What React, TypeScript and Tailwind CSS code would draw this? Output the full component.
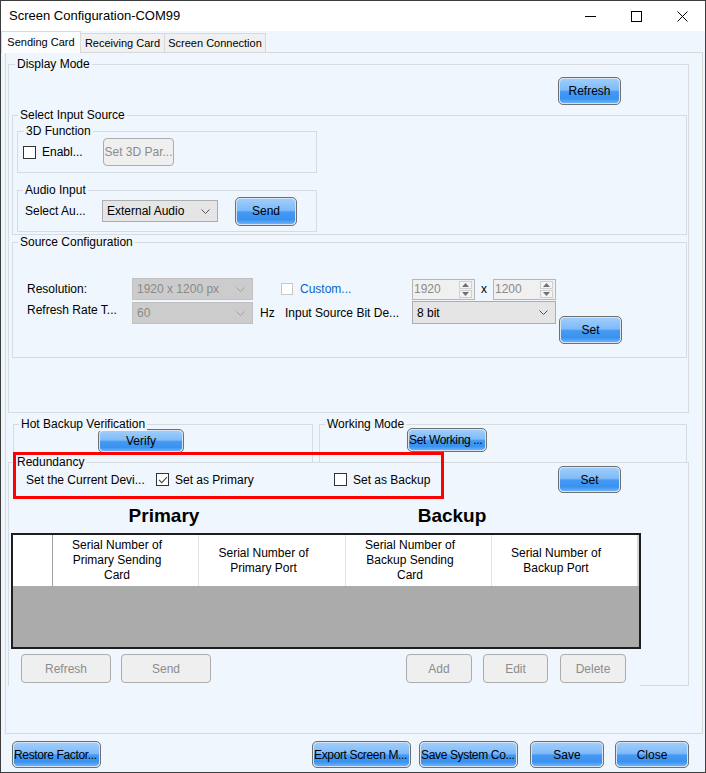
import React from 'react';

const PANEL_BG = 'bg-[#eff6fd]';

const blueFill =
  'bg-[linear-gradient(180deg,#9dcdfd_0%,#80bbf8_45%,#4499f3_53%,#3a92f0_82%,#68b2fb_100%)]';

function BlueButton({
  children,
  className = '',
  left = false,
}: {
  children: React.ReactNode;
  className?: string;
  left?: boolean;
}) {
  return (
    <div className={`shrink-0 rounded-[5px] border border-[#6f6f6f] bg-[#d7e3f3] p-px ${className}`}>
      <div
        className={`flex h-full w-full items-center overflow-hidden whitespace-nowrap rounded-[4px] text-[12px] text-black ${blueFill} ${
          left ? 'justify-start tracking-[-0.35px]' : 'justify-center'
        }`}
      >
        {children}
      </div>
    </div>
  );
}

function GrayButton({ children, className = '' }: { children: React.ReactNode; className?: string }) {
  return (
    <div
      className={`flex shrink-0 items-center justify-center rounded-[4px] border border-[#acacac] bg-[#efefef] text-[12px] text-[#8c8c8c] ${className}`}
    >
      {children}
    </div>
  );
}

function GroupBox({
  label,
  className = '',
  labelClass = 'left-[5px]',
  children,
}: {
  label: string;
  className?: string;
  labelClass?: string;
  children?: React.ReactNode;
}) {
  return (
    <div className={`relative shrink-0 border border-[#d6dce2] ${className}`}>
      <span className={`absolute top-[-8px] ${labelClass} ${PANEL_BG} whitespace-nowrap px-[2px] text-[12px] leading-[14px]`}>
        {label}
      </span>
      {children}
    </div>
  );
}

function CheckBox({ checked = false, disabled = false }: { checked?: boolean; disabled?: boolean }) {
  return (
    <span
      className={`flex shrink-0 items-center justify-center bg-white ${
        disabled ? 'h-[12px] w-[12px] border border-[#c8c8c8]' : 'h-[13px] w-[13px] border border-[#333333]'
      }`}
    >
      {checked && (
        <svg width="10" height="8" viewBox="0 0 10 8">
          <path d="M1 3.8 L3.8 6.6 L9 1.2" fill="none" stroke="#444" strokeWidth="1.1" />
        </svg>
      )}
    </span>
  );
}

function Chevron({ color }: { color: string }) {
  return (
    <svg width="9" height="5" viewBox="0 0 9 5" className="shrink-0">
      <path d="M0.5 0.5 L4.5 4.5 L8.5 0.5" fill="none" stroke={color} strokeWidth="1" />
    </svg>
  );
}

function Combo({
  value,
  disabled = false,
  className = '',
}: {
  value: string;
  disabled?: boolean;
  className?: string;
}) {
  return (
    <div
      className={`flex shrink-0 items-center justify-between border pl-[4px] pr-[7px] text-[12px] ${
        disabled ? 'border-[#c2c2c2] bg-[#cccccc] text-[#8a8a8a]' : 'border-[#adadad] bg-[#e5e5e5] text-black'
      } ${className}`}
    >
      <span className="whitespace-nowrap">{value}</span>
      <Chevron color={disabled ? '#a3a3a3' : '#555555'} />
    </div>
  );
}

function SpinBox({ value }: { value: string }) {
  return (
    <div className="flex h-[21px] w-[63px] shrink-0 border border-[#b5b5b5] bg-[#f0f0f0]">
      <span className="flex-1 pl-[1px] text-[12px] leading-[19px] text-[#8a8a8a]">{value}</span>
      <div className="mr-[2px] flex w-[13px] flex-col justify-center gap-px">
        <div className="flex h-[8px] items-center justify-center border border-[#cfcfcf] bg-[#f4f4f4]">
          <svg width="7" height="4" viewBox="0 0 7 4">
            <path d="M0 4 L3.5 0 L7 4 Z" fill="#707070" />
          </svg>
        </div>
        <div className="flex h-[8px] items-center justify-center border border-[#cfcfcf] bg-[#f4f4f4]">
          <svg width="7" height="4" viewBox="0 0 7 4">
            <path d="M0 0 L3.5 4 L7 0 Z" fill="#707070" />
          </svg>
        </div>
      </div>
    </div>
  );
}

function HeaderCell({ lines, className }: { lines: string[]; className: string }) {
  return (
    <div
      className={`flex shrink-0 flex-col items-center justify-center pr-[17px] text-center text-[12px] leading-[15px] ${className}`}
    >
      {lines.map((l) => (
        <span key={l} className="whitespace-nowrap">
          {l}
        </span>
      ))}
    </div>
  );
}

export default function App() {
  return (
    <div
      className={`flex h-[773px] w-[706px] flex-col border border-[#3d3d3d] ${PANEL_BG} font-['Liberation_Sans',Arial,sans-serif] text-[12px] text-black`}
    >
      {/* Title bar */}
      <div className="flex h-[30px] shrink-0 items-center bg-white">
        <span className="pl-[8px] text-[13px]">Screen Configuration-COM99</span>
        <div className="ml-auto flex h-full">
          <div className="flex w-[46px] items-center justify-center">
            <svg width="11" height="1" viewBox="0 0 11 1">
              <rect width="11" height="1" fill="#000" />
            </svg>
          </div>
          <div className="flex w-[46px] items-center justify-center">
            <svg width="11" height="11" viewBox="0 0 11 11">
              <rect x="0.5" y="0.5" width="10" height="10" fill="none" stroke="#000" />
            </svg>
          </div>
          <div className="flex w-[46px] items-center justify-center">
            <svg width="11" height="11" viewBox="0 0 11 11">
              <path d="M0.5 0.5 L10.5 10.5 M10.5 0.5 L0.5 10.5" stroke="#000" strokeWidth="1" />
            </svg>
          </div>
        </div>
      </div>

      {/* Tabs */}
      <div className="flex h-[21px] shrink-0 items-end">
        <div className="relative z-10 -mb-px flex h-[22px] w-[80px] items-center justify-center border border-b-0 border-[#d9d9d9] bg-[#fbfdff] text-[11px]">
          Sending Card
        </div>
        <div className="flex h-[19px] w-[84px] items-center justify-center border border-b-0 border-l-0 border-[#d9d9d9] bg-[#f0f0f0] text-[11px]">
          Receiving Card
        </div>
        <div className="flex h-[19px] w-[101px] items-center justify-center border border-b-0 border-l-0 border-[#d9d9d9] bg-[#f0f0f0] text-[11px]">
          Screen Connection
        </div>
      </div>

      {/* Sending Card page */}
      <div className="ml-[4px] flex h-[682px] w-[698px] shrink-0 flex-col border border-[#d9d9d9]">
        <GroupBox label="Display Mode" labelClass="left-[6px]" className="ml-[2px] mt-[11px] h-[349px] w-[681px]">
          <BlueButton className="ml-[549px] mt-[12px] h-[28px] w-[63px]">Refresh</BlueButton>

          <GroupBox label="Select Input Source" className="ml-[3px] mt-[10px] h-[120px] w-[675px]">
            <GroupBox label="3D Function" labelClass="left-[6px]" className="ml-[4px] mt-[15px] h-[42px] w-[300px]">
              <div className="flex h-full items-center">
                <span className="ml-[5px]">
                  <CheckBox />
                </span>
                <span className="ml-[6px] w-[61px]">Enabl...</span>
                <GrayButton className="h-[28px] w-[71px]">Set 3D Par...</GrayButton>
              </div>
            </GroupBox>

            <GroupBox label="Audio Input" className="ml-[4px] mt-[17px] h-[42px] w-[300px]">
              <div className="flex h-full items-center">
                <span className="ml-[7px] w-[77px]">Select Au...</span>
                <Combo value="External Audio" className="h-[22px] w-[116px]" />
                <BlueButton className="ml-[17px] h-[29px] w-[62px]">Send</BlueButton>
              </div>
            </GroupBox>
          </GroupBox>

          <GroupBox label="Source Configuration" className="ml-[3px] mt-[7px] h-[116px] w-[675px]">
            <div className="mt-[35px] flex h-[22px] items-center">
              <span className="ml-[14px] w-[105px]">Resolution:</span>
              <Combo value="1920 x 1200 px" disabled className="h-[22px] w-[121px]" />
              <span className="ml-[28px]">
                <CheckBox disabled />
              </span>
              <span className="ml-[7px] w-[112px] text-[#0a64c8]">Custom...</span>
              <SpinBox value="1920" />
              <span className="w-[18px] text-center">x</span>
              <SpinBox value="1200" />
            </div>
            <div className="mt-px flex items-start">
              <span className="ml-[14px] w-[105px] leading-[18px]">Refresh Rate T...</span>
              <Combo value="60" disabled className="mt-px h-[22px] w-[121px]" />
              <span className="ml-[7px] mt-[5px] w-[25px] leading-[14px]">Hz</span>
              <span className="mt-[5px] w-[127px] whitespace-nowrap leading-[14px]">Input Source Bit De...</span>
              <Combo value="8 bit" className="h-[23px] w-[144px]" />
              <BlueButton className="ml-[3px] mt-[15px] h-[28px] w-[63px]">Set</BlueButton>
            </div>
          </GroupBox>
        </GroupBox>

        <div className="mt-[11px] flex">
          <GroupBox label="Hot Backup Verification" className="ml-[7px] h-[38px] w-[300px] border-b-0">
            <BlueButton className="ml-[84px] mt-[4px] h-[24px] w-[86px]">Verify</BlueButton>
          </GroupBox>
          <GroupBox label="Working Mode" className="ml-[6px] h-[38px] w-[368px] border-b-0">
            <BlueButton left className="ml-[87px] mt-[3px] h-[24px] w-[80px]">
              Set Working ...
            </BlueButton>
          </GroupBox>
        </div>

        <GroupBox label="Redundancy" labelClass="left-[6px]" className="ml-[2px] h-[224px] w-[681px] border-b-0">
          <div className="absolute bottom-0 right-[-1px] h-px w-[49px] bg-[#d6dce2]" />
          <div className="pointer-events-none absolute left-[4px] top-[-11px] h-[47px] w-[431px] border-[3px] border-[#ff0000]" />

          <div className="mt-[3px] flex h-[27px] items-center">
            <span className="ml-[17px] w-[130px] whitespace-nowrap">Set the Current Devi...</span>
            <CheckBox checked />
            <span className="ml-[6px] w-[159px]">Set as Primary</span>
            <CheckBox />
            <span className="ml-[6px] w-[205px]">Set as Backup</span>
            <BlueButton className="h-[27px] w-[63px]">Set</BlueButton>
          </div>

          <div className="mt-[12px] flex text-[19px] font-bold leading-[22px]">
            <span className="w-[310px] text-center">Primary</span>
            <span className="w-[266px] text-center">Backup</span>
          </div>

          <div className="ml-[2px] mt-[6px] flex h-[116px] w-[630px] flex-col border-2 border-[#1e1e1e] bg-[#ababab]">
            <div className="flex h-[51px] shrink-0 bg-white">
              <div className="w-[40px] shrink-0 border-r border-[#a0a0a0]" />
              <HeaderCell
                lines={['Serial Number of', 'Primary Sending', 'Card']}
                className="w-[146px] border-r border-[#e3e3e3]"
              />
              <HeaderCell lines={['Serial Number of', 'Primary Port']} className="w-[147px] border-r border-[#e3e3e3]" />
              <HeaderCell
                lines={['Serial Number of', 'Backup Sending', 'Card']}
                className="w-[146px] border-r border-[#e3e3e3]"
              />
              <HeaderCell lines={['Serial Number of', 'Backup Port']} className="w-[145px]" />
              <div className="flex-1 bg-[#d8d8d8]" />
            </div>
          </div>

          <div className="mt-[5px] flex h-[29px]">
            <GrayButton className="ml-[12px] h-[29px] w-[90px]">Refresh</GrayButton>
            <GrayButton className="ml-[10px] h-[29px] w-[90px]">Send</GrayButton>
            <GrayButton className="ml-[195px] h-[29px] w-[66px]">Add</GrayButton>
            <GrayButton className="ml-[11px] h-[29px] w-[65px]">Edit</GrayButton>
            <GrayButton className="ml-[12px] h-[29px] w-[66px]">Delete</GrayButton>
          </div>
        </GroupBox>
      </div>

      {/* Dialog buttons */}
      <div className="mt-[7px] flex h-[27px] shrink-0">
        <BlueButton left className="ml-[11px] h-[27px] w-[89px]">
          Restore Factor...
        </BlueButton>
        <BlueButton left className="ml-[211px] h-[27px] w-[99px]">
          Export Screen M...
        </BlueButton>
        <BlueButton left className="ml-[8px] h-[27px] w-[99px]">
          Save System Co...
        </BlueButton>
        <BlueButton className="ml-[12px] h-[27px] w-[74px]">Save</BlueButton>
        <BlueButton className="ml-[11px] h-[27px] w-[74px]">Close</BlueButton>
      </div>
    </div>
  );
}
